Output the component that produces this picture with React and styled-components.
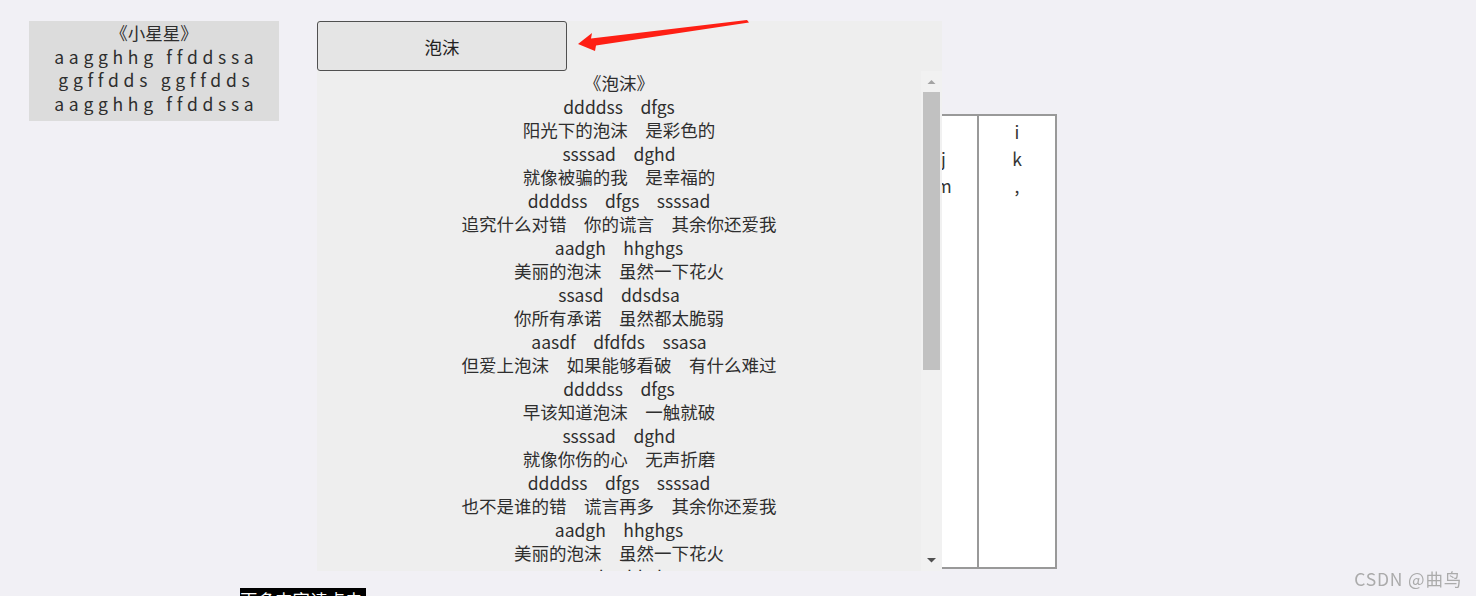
import React from "react";
import styled, { createGlobalStyle } from "styled-components";

const Global = createGlobalStyle`
  html, body { margin: 0; padding: 0; }
  body {
    background: #f1f0f5;
    font-family: "Noto Sans CJK SC", "Noto Sans", sans-serif;
    color: #333;
    overflow: hidden;
  }
`;

const Page = styled.div`
  position: relative;
  padding: 21px 0 0 29px;
  height: 596px;
  box-sizing: border-box;
`;

const TopRow = styled.div`
  display: flex;
  align-items: flex-start;
`;

const SongCard = styled.div`
  width: 250px;
  height: 100px;
  background: #dcdcdc;
  text-align: center;
  font-size: 17.5px;
  line-height: 23.5px;
  color: #2e2e2e;
`;

const NoteLine = styled.div`
  letter-spacing: 4.7px;
  padding-left: 4.7px;
`;

const Player = styled.div`
  position: relative;
  z-index: 1;
  margin-left: 38px;
  width: 625px;
  height: 550px;
  background: #eeeeee;
  display: flex;
  flex-direction: column;
`;

const SongButton = styled.button`
  width: 250px;
  height: 50px;
  box-sizing: border-box;
  border: 1px solid #505050;
  border-radius: 3px;
  background: #e5e5e5;
  font-family: "Noto Sans CJK SC", sans-serif;
  font-size: 17.5px;
  color: #222;
  padding: 0;
  flex: none;
`;

const LyricsArea = styled.div`
  display: flex;
  height: 500px;
`;

const LyricsBody = styled.div`
  flex: 1;
  overflow: hidden;
  text-align: center;
  font-size: 17.5px;
  line-height: 23.5px;
  color: #2e2e2e;
`;

const LyricLine = styled.div`
  white-space: pre;
`;

const ScrollBar = styled.div`
  width: 21px;
  flex: none;
  background: #f1f1f1;
  display: flex;
  flex-direction: column;
`;

const ScrollButton = styled.div`
  height: 21px;
  flex: none;
  display: flex;
  align-items: center;
  justify-content: center;
`;

const ScrollTrack = styled.div`
  flex: 1;
  padding: 0 2px;
`;

const ScrollThumb = styled.div`
  height: 278px;
  background: #c1c1c1;
`;

const KeyTable = styled.div`
  display: flex;
  margin-top: 93px;
  margin-left: -43px;
  height: 455px;
  box-sizing: border-box;
  border: 2px solid #999;
  background: #fff;
`;

const KeyColumn = styled.div`
  width: ${(p) => (p.$last ? 76 : 78)}px;
  padding-top: 2px;
  padding-left: ${(p) => p.$shift || 0}px;
  box-sizing: border-box;
  border-right: ${(p) => (p.$last ? "none" : "2px solid #999")};
  text-align: center;
  font-size: 17.5px;
  line-height: 27px;
  color: #333;
`;

const BottomRow = styled.div`
  margin-top: 17px;
  padding-left: 211px;
`;

const MoreLink = styled.span`
  display: inline-block;
  background: #000;
  color: #fff;
  font-size: 17.5px;
  line-height: 23.5px;
  padding-right: 3px;
`;

const Watermark = styled.div`
  position: fixed;
  right: 14px;
  bottom: 6px;
  font-size: 17.5px;
  line-height: 23px;
  letter-spacing: 0.8px;
  color: #ababab;
  font-family: "Noto Sans CJK SC", sans-serif;
`;

const ArrowLayer = styled.svg`
  position: absolute;
  left: 0;
  top: 0;
  z-index: 2;
  pointer-events: none;
`;

const lyrics = [
  "《泡沫》",
  "ddddss　dfgs",
  "阳光下的泡沫　是彩色的",
  "ssssad　dghd",
  "就像被骗的我　是幸福的",
  "ddddss　dfgs　ssssad",
  "追究什么对错　你的谎言　其余你还爱我",
  "aadgh　hhghgs",
  "美丽的泡沫　虽然一下花火",
  "ssasd　ddsdsa",
  "你所有承诺　虽然都太脆弱",
  "aasdf　dfdfds　ssasa",
  "但爱上泡沫　如果能够看破　有什么难过",
  "ddddss　dfgs",
  "早该知道泡沫　一触就破",
  "ssssad　dghd",
  "就像你伤的心　无声折磨",
  "ddddss　dfgs　ssssad",
  "也不是谁的错　谎言再多　其余你还爱我",
  "aadgh　hhghgs",
  "美丽的泡沫　虽然一下花火",
  "ssasd　ddsdsa",
  "你所有承诺　虽然都太脆弱",
  "aasdf　dfdfds　ssasa",
  "爱本是泡沫　如果能够看破　有什么难过",
  "aadgh　hhghgs",
  "再美的花火　也是一瞬间焰火",
  "ssasd　ddsdsa",
  "你所有承诺　全部都太脆弱",
  "aasdf　dfdfds　ssasa",
  "而你的轮廓　怪我没有看破　才如此难过",
  "aadgh　hhghgs",
  "在雨下的泡沫　一触就破",
  "ssasd　ddsdsa",
  "当初炙热的心　早已沉没",
];

export default function App() {
  return (
    <>
      <Global />
      <Page>
        <TopRow>
          <SongCard>
            <div>《小星星》</div>
            <NoteLine>aagghhg ffddssa</NoteLine>
            <NoteLine>ggffdds ggffdds</NoteLine>
            <NoteLine>aagghhg ffddssa</NoteLine>
          </SongCard>
          <Player>
            <SongButton>泡沫</SongButton>
            <LyricsArea>
              <LyricsBody>
                {lyrics.map((l, i) => (
                  <LyricLine key={i}>{l}</LyricLine>
                ))}
              </LyricsBody>
              <ScrollBar>
                <ScrollButton>
                  <svg width="9" height="5" viewBox="0 0 9 5">
                    <polygon points="0.5,5 4.5,1 8.5,5" fill="#a3a3a3" />
                  </svg>
                </ScrollButton>
                <ScrollTrack>
                  <ScrollThumb />
                </ScrollTrack>
                <ScrollButton>
                  <svg width="9" height="5" viewBox="0 0 9 5">
                    <polygon points="0,0 9,0 4.5,4.5" fill="#505050" />
                  </svg>
                </ScrollButton>
              </ScrollBar>
            </LyricsArea>
          </Player>
          <KeyTable>
            <KeyColumn $shift={9}>
              <div>&nbsp;</div>
              <div>j</div>
              <div>m</div>
            </KeyColumn>
            <KeyColumn $last>
              <div>i</div>
              <div>k</div>
              <div>,</div>
            </KeyColumn>
          </KeyTable>
        </TopRow>
        <BottomRow>
          <MoreLink>更多内容请点击</MoreLink>
        </BottomRow>
        <ArrowLayer width="760" height="60" viewBox="0 0 760 60">
          <polygon
            points="578,44 592,33 591,38.5 747,20 749,22.5 596,45.5 595,51"
            fill="#fe1f14"
          />
        </ArrowLayer>
        <Watermark>CSDN @曲鸟</Watermark>
      </Page>
    </>
  );
}
